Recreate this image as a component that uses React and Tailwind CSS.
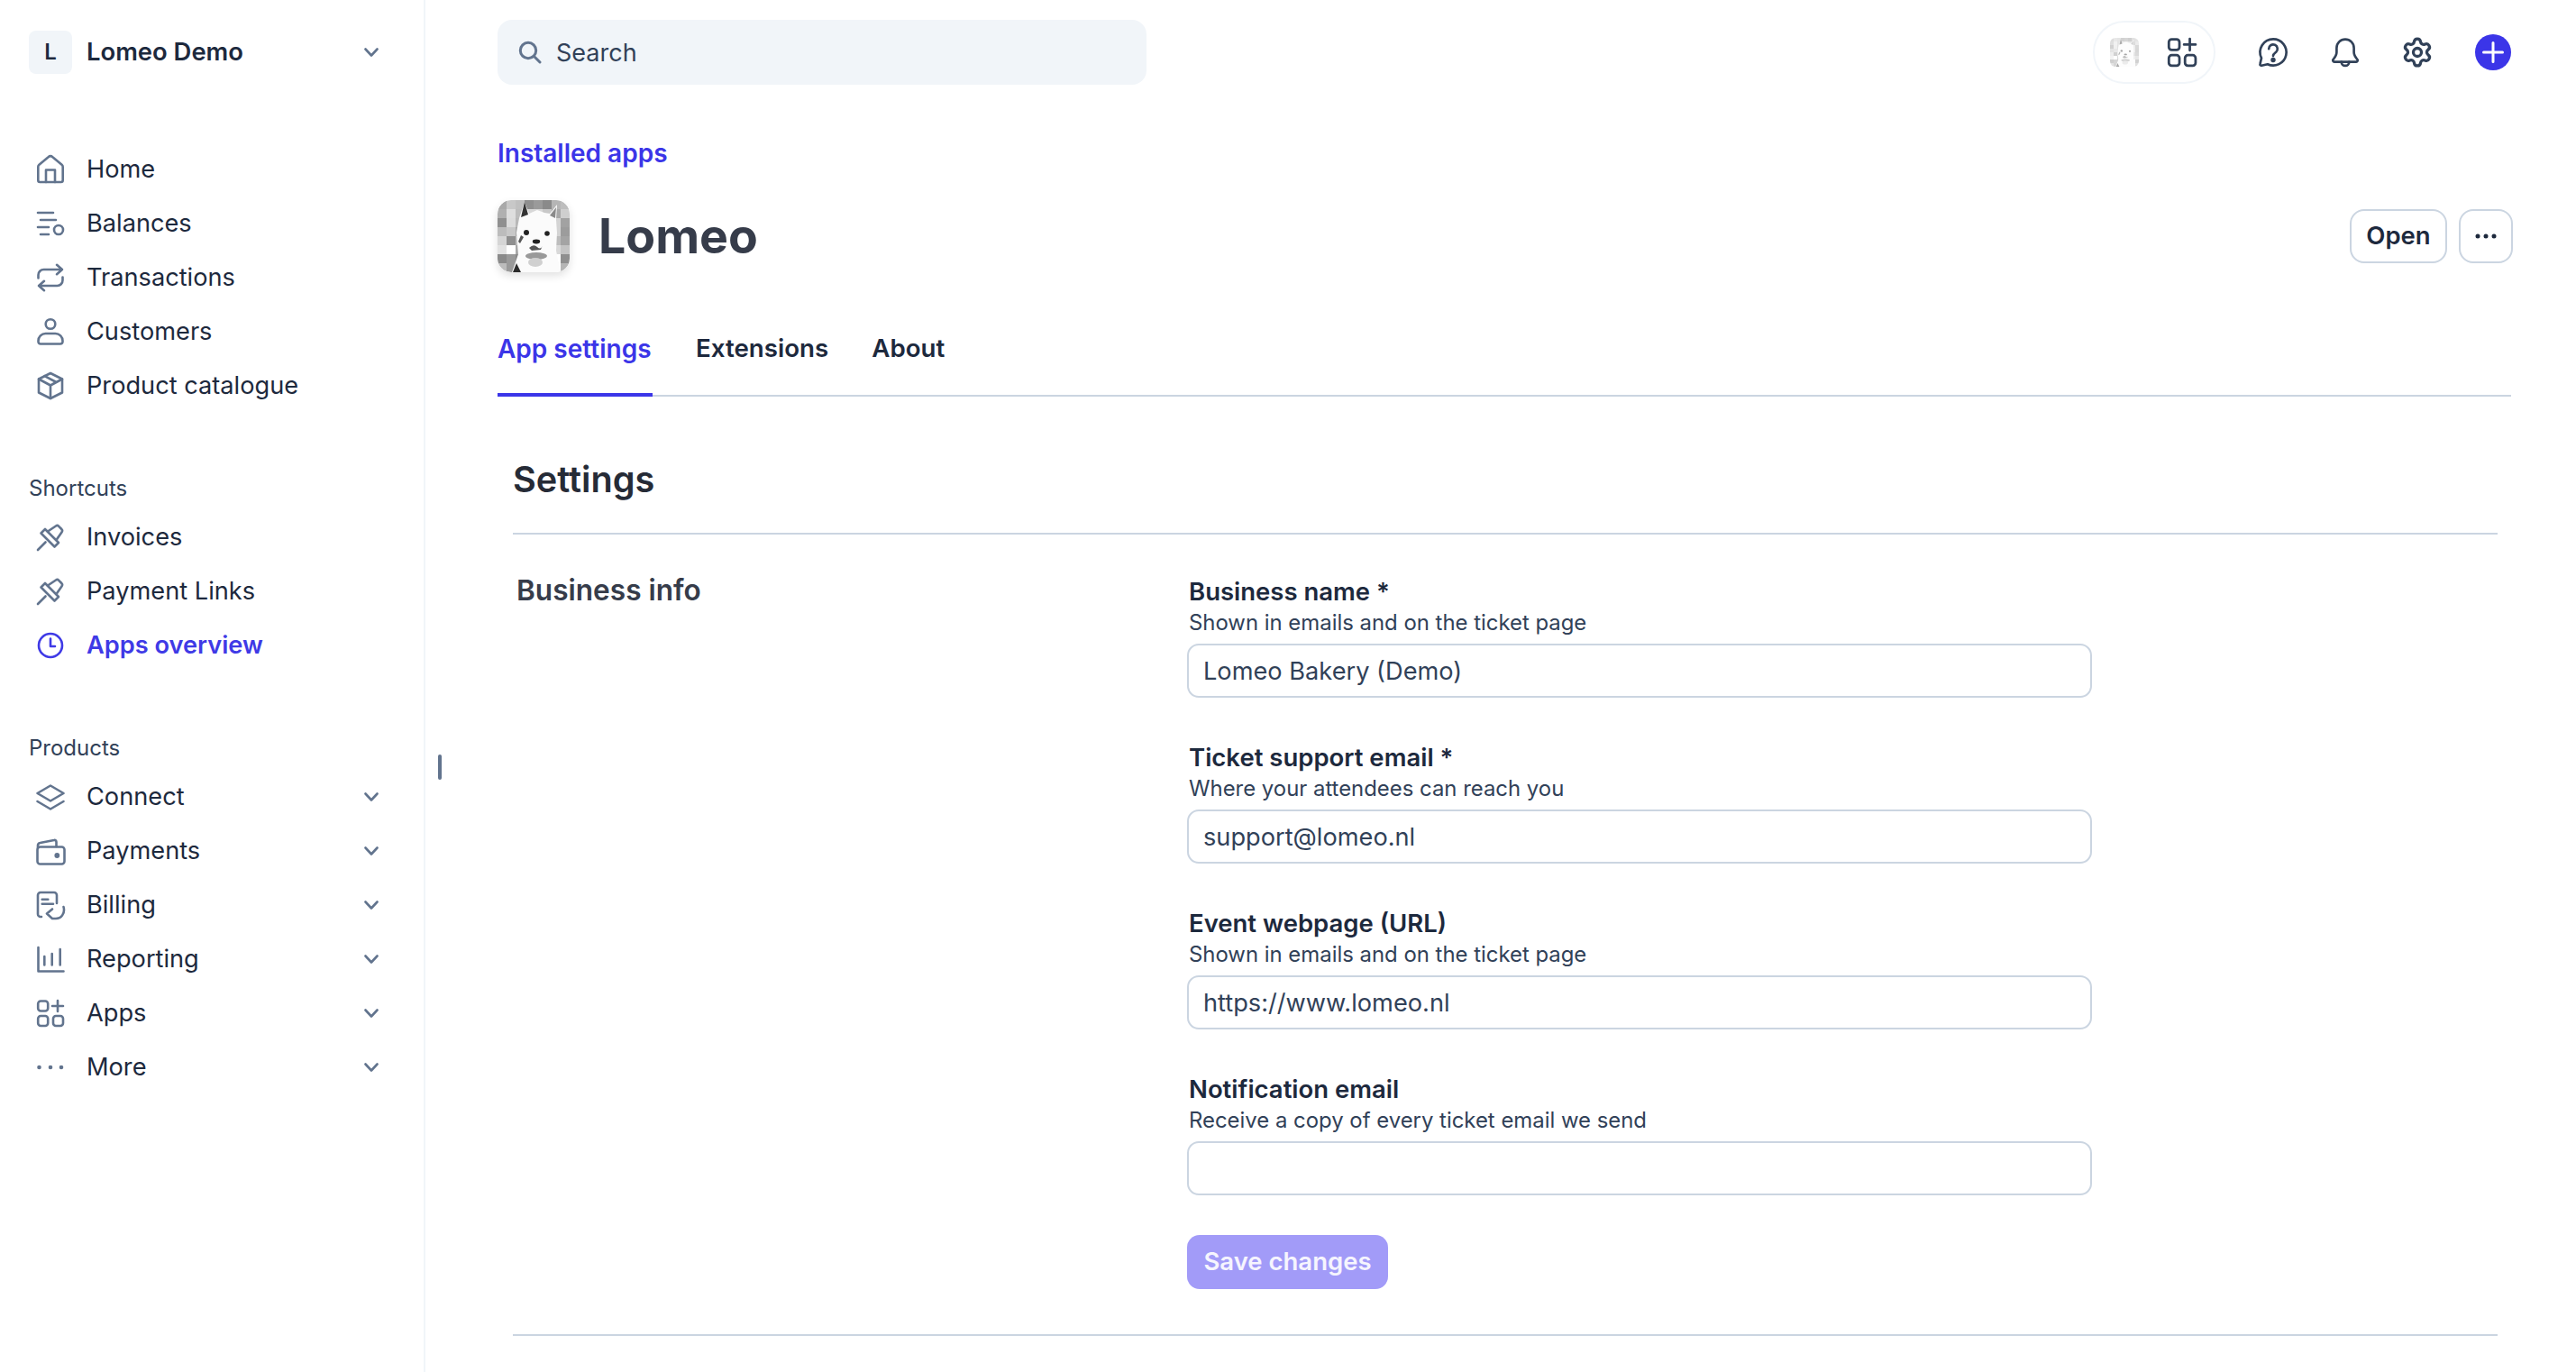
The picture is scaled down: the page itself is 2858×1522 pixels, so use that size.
import React from "react";
import { Settings } from "lucide-react";

const Ico = ({ children, className = "w-[30px] h-[30px]", sw = 2.6 }) => (
  <svg viewBox="0 0 30 30" fill="none" stroke="currentColor" strokeWidth={sw} strokeLinecap="round" strokeLinejoin="round" className={`${className} shrink-0 overflow-visible`}>
    {children}
  </svg>
);

const Home = () => <Ico><path d="M1.300 12a3 3 0 0 1 1.100-2.300L12.600 1.300a3.600 3.600 0 0 1 4.800 0L27.600 9.700a3 3 0 0 1 1.100 2.300V27a2 2 0 0 1-2 2H3.300a2 2 0 0 1-2-2Z" /><path d="M10 29V15.500H20V29" /></Ico>;
const Balances = () => <Ico><path d="M1 3H18M4 11H21M1 19H13M4 27H13" /><circle cx="24" cy="22" r="5" /></Ico>;
const Transactions = () => <Ico><path d="M1.500 15.500V12a6 6 0 0 1 6-6H28M22 .8 28 6 22 11.200" /><path d="M28.500 14.500V18a6 6 0 0 1-6 6H2M8 18.800 2 24 8 29.200" /></Ico>;
const Customers = () => <Ico><circle cx="15" cy="6.500" r="5.300" /><path d="M9.500 17H20.500a8 8 0 0 1 8 8v1a2.500 2.500 0 0 1-2.500 2.500H4A2.500 2.500 0 0 1 1.500 26v-1a8 8 0 0 1 8-8Z" /></Ico>;
const Box = () => <Ico><path d="M15 1 28 7.500V22.500L15 29 2 22.500V7.500Z" /><path d="M2 7.500 15 14.500 28 7.500M15 14.500V29M8.500 4.200 21.500 11" /></Ico>;
const Pin = () => <Ico><path d="M1 29 9.500 20.500" /><path d="M4.500 10.500 9 6 24 21 19.500 25.500Z" /><path d="M12 8.500 21 2.500a2.500 2.500 0 0 1 3.200.3L27.300 6a2.500 2.500 0 0 1 .3 3.200L21.500 18" /></Ico>;
const Clock = () => <Ico><circle cx="15" cy="15" r="13" /><path d="M15 7.500V16H20" /></Ico>;
const Layers = () => <Ico><path d="M15 2.500 29.500 11 15 19.500 .5 11Z" /><path d="M.5 20 15 28.500 29.500 20" /></Ico>;
const Wallet = () => <Ico><rect x="0.5" y="10.500" width="30" height="19" rx="3" /><path d="M1 12V9a3 3 0 0 1 2.500-3L19 3a2 2 0 0 1 2.500 2V10" /><circle cx="22.300" cy="20" r="1.600" fill="currentColor" /></Ico>;
const Billing = () => <Ico><path d="M5 28H4a3 3 0 0 1-3-3V4a3 3 0 0 1 3-3H19a3 3 0 0 1 3 3V13" /><path d="M5.700 8.700H12.300M5.700 13.700H18" /><path d="M29.500 17C31.500 24 27 30 21 30H17L11 24.500 17 19.500" /></Ico>;
const Reporting = () => <Ico><path d="M1.500 2V28.500H29.500" /><path d="M8.300 12V21.500M16.700 9V21.500M25.700 4V21.500" /></Ico>;
const Apps = ({ className, sw }) => <Ico className={className} sw={sw}><rect x="1.200" y="1.500" width="11" height="11" rx="3" /><path d="M23 1V13M17 7H29" /><rect x="1.200" y="18" width="11" height="11" rx="3" /><rect x="18" y="18" width="11" height="11" rx="3" /></Ico>;
const More = () => <Ico sw={0}><circle cx="2.500" cy="15" r="2.300" fill="currentColor" /><circle cx="15" cy="15" r="2.300" fill="currentColor" /><circle cx="27" cy="15" r="2.300" fill="currentColor" /></Ico>;

const Chevron = () => (
  <svg viewBox="0 0 16 12" fill="none" stroke="currentColor" strokeWidth="2.600" strokeLinecap="round" strokeLinejoin="round" className="w-[16px] h-[12px] text-slate-500 shrink-0">
    <path d="M1.500 2.500 8 9.500 14.500 2.500" />
  </svg>
);

const shades = [
  ["#a9a9a9", "#c8c8c8", "#c0c0c0", "#8f8f8f", "#9a9a9a", "#8a8a8a", "#b5b5b5", "#bdbdbd"],
  ["#b0b0b0", "#dedede", "#bdbdbd", "#d8d8d8", "#d8d8d8", "#c8c8c8", "#a8a8a8", "#cfcfcf"],
  ["#8f8f8f", "#dcdcdc", "#b8b8b8", "#dddddd", "#dddddd", "#dddddd", "#d4d4d4", "#a2a2a2"],
  ["#bcbcbc", "#c8c8c8", "#a8a8a8", "#dddddd", "#dddddd", "#dddddd", "#d4d4d4", "#9c9c9c"],
  ["#d5d5d5", "#8f8f8f", "#bdbdbd", "#dddddd", "#dddddd", "#dddddd", "#bdbdbd", "#a4a4a4"],
  ["#e2e2e2", "#ffffff", "#a8a8a8", "#dddddd", "#dddddd", "#dddddd", "#d9d9d9", "#c4c4c4"],
  ["#8a8a8a", "#9a9a9a", "#8a8a8a", "#dddddd", "#dddddd", "#a6a6a6", "#ffffff", "#8f8f8f"],
  ["#bcbcbc", "#9a9a9a", "#d8d8d8", "#dddddd", "#dddddd", "#e6e6e6", "#ffffff", "#b5b5b5"],
];

const Alpaca = ({ id, className }) => (
  <svg viewBox="0 0 80 80" className={className}>
    <defs>
      <clipPath id={id}><rect width="80" height="80" rx="15" /></clipPath>
    </defs>
    <g clipPath={`url(#${id})`}>
      {shades.map((r, y) => r.map((c, x) => <rect key={`${x}-${y}`} x={x * 10} y={y * 10} width="10.200" height="10.200" fill={c} />))}
      <path d="M24 20 30 2 35 15 44 11 52 14 58 15 66 5 65 22 66 36 65 56 70 80H16L23 60 21 36Z" fill="#fbfbfb" />
      <path d="M26 19 30 2 34 16Z" fill="#333" />
      <path d="M58 17 65 8 64 20Z" fill="#8a8a8a" />
      <circle cx="32" cy="36" r="3" fill="#222" />
      <circle cx="55" cy="37" r="2.800" fill="#222" />
      <path d="M26 39 29 41 25 48 23 46Z" fill="#555" />
      <ellipse cx="43" cy="46" rx="4.200" ry="2.400" fill="#222" />
      <path d="M35 53Q40 48 44 52T50 50L48 55 38 56Z" fill="#555" />
      <ellipse cx="43" cy="62" rx="12" ry="4" fill="#999" />
      <ellipse cx="42" cy="69" rx="8" ry="5" fill="#d0d0d0" />
      <path d="M17 80 21 70 26 80Z" fill="#2b2b2b" />
    </g>
  </svg>
);

const NavRow = ({ icon, label, active, chevron }) => (
  <div className={`flex items-center h-[60px] pl-[41px] pr-[50px] ${active ? "text-[#3f3ae6]" : "text-slate-500"}`}>
    {icon}
    <span className={`ml-[25px] flex-1 text-[27.200px] leading-[40px] ${active ? "font-semibold text-[#3f3ae6]" : "text-slate-800"}`}>{label}</span>
    {chevron && <Chevron />}
  </div>
);

const Field = ({ label, hint, value }) => (
  <div className="mb-[48px]">
    <div className="h-[36px] pl-[2px] text-[27.500px] leading-[36px] font-semibold text-slate-800">{label}</div>
    <div className="h-[35px] pl-[2px] text-[23.900px] leading-[34px] text-slate-700">{hint}</div>
    <input
      readOnly
      defaultValue={value}
      className="mt-[5px] block w-[1004px] h-[60px] px-[16px] bg-white border-2 border-[#cbd5e1] rounded-[13px] text-[27.200px] text-slate-700 outline-none"
    />
  </div>
);

export default function App() {
  return (
    <div className="flex min-h-[1522px] bg-white font-['Inter',sans-serif]">
      <aside className="relative w-[472px] shrink-0 border-r-2 border-[#f1f5f9] pt-[34px]">
        <div className="flex items-center h-[48px] pl-[32px] pr-[50px]">
          <div className="flex items-center justify-center w-[48px] h-[48px] rounded-[8px] bg-[#f1f5f9] text-[24px] font-semibold text-slate-800">L</div>
          <span className="ml-[16px] flex-1 text-[27.400px] font-semibold text-slate-800">Lomeo Demo</span>
          <Chevron />
        </div>
        <nav className="mt-[76px]">
          <NavRow icon={<Home />} label="Home" />
          <NavRow icon={<Balances />} label="Balances" />
          <NavRow icon={<Transactions />} label="Transactions" />
          <NavRow icon={<Customers />} label="Customers" />
          <NavRow icon={<Box />} label="Product catalogue" />
        </nav>
        <div className="mt-[66px] pl-[32px] h-[36px] text-[24px] leading-[36px] text-slate-700">Shortcuts</div>
        <nav className="mt-[6px]">
          <NavRow icon={<Pin />} label="Invoices" />
          <NavRow icon={<Pin />} label="Payment Links" />
          <NavRow icon={<Clock />} label="Apps overview" active />
        </nav>
        <div className="mt-[66px] pl-[32px] h-[36px] text-[24px] leading-[36px] text-slate-700">Products</div>
        <nav className="mt-[6px]">
          <NavRow icon={<Layers />} label="Connect" chevron />
          <NavRow icon={<Wallet />} label="Payments" chevron />
          <NavRow icon={<Billing />} label="Billing" chevron />
          <NavRow icon={<Reporting />} label="Reporting" chevron />
          <NavRow icon={<Apps />} label="Apps" chevron />
          <NavRow icon={<More />} label="More" chevron />
        </nav>
        <div className="absolute left-[486px] top-[837px] w-[4px] h-[28px] rounded-full bg-slate-500" />
      </aside>

      <main className="flex-1 min-w-0 pl-[80px] pr-[70px]">
        <header className="flex items-center justify-between mt-[22px] h-[72px]">
          <div className="flex items-center w-[720px] h-[72px] rounded-[16px] bg-[#f1f5f9] pl-[23px]">
            <svg viewBox="0 0 26 26" fill="none" stroke="currentColor" strokeWidth="3" strokeLinecap="round" className="w-[26px] h-[26px] text-slate-500">
              <circle cx="11" cy="11" r="8.700" />
              <path d="M17.500 17.500 24 24" />
            </svg>
            <span className="ml-[16px] pt-[2px] text-[27px] text-slate-700">Search</span>
          </div>
          <div className="flex items-center text-slate-700 pr-[2px]">
            <div className="flex items-center h-[70px] w-[136px] rounded-full border-2 border-[#f1f5f9] pl-[17px]">
              <Alpaca id="logo-small" className="w-[32px] h-[32px] opacity-40" />
              <span className="ml-[32px]"><Apps className="w-[32px] h-[32px]" sw={2.6} /></span>
            </div>
            <span className="ml-[48px]">
              <Ico className="w-[32px] h-[32px]" sw={2.5}>
                <path d="M15 1.300a13.700 13.700 0 1 1-5.800 26.100L3 28.800a1.300 1.300 0 0 1-1.600-1.600L2.800 21A13.700 13.700 0 0 1 15 1.300Z" />
                <path d="M10.500 11.500a4.500 4.500 0 1 1 7.500 3.300c-1.700 1.300-3 2-3 4" />
                <circle cx="15" cy="23" r="1.300" fill="currentColor" />
              </Ico>
            </span>
            <span className="ml-[48px]">
              <Ico className="w-[32px] h-[32px]" sw={2.5}>
                <path d="M15 1.500a9 9 0 0 0-9 9V15c0 3-1.500 5-3.500 7.500A1.500 1.500 0 0 0 3.700 25H26.300a1.500 1.500 0 0 0 1.200-2.500C25.500 20 24 18 24 15V10.500a9 9 0 0 0-9-9Z" />
                <path d="M11 25a4 4 0 0 0 8 0" />
              </Ico>
            </span>
            <Settings className="ml-[46px] w-[36px] h-[36px]" strokeWidth={2.2} />
            <div className="ml-[46px] flex items-center justify-center w-[40px] h-[40px] rounded-full bg-[#3b35e8]">
              <svg viewBox="0 0 24 24" fill="none" stroke="white" strokeWidth="3" strokeLinecap="round" className="w-[24px] h-[24px]">
                <path d="M12 1.500V22.500M1.500 12H22.500" />
              </svg>
            </div>
          </div>
        </header>

        <div className="mt-[56px] h-[40px] text-[28px] leading-[40px] font-semibold text-[#3b35e8]">Installed apps</div>

        <div className="mt-[32px] flex items-center h-[80px]">
          <Alpaca id="logo-big" className="w-[80px] h-[80px] shrink-0 rounded-[15px] shadow-[0_4px_10px_rgba(0,0,0,0.12)]" />
          <h1 className="ml-[32px] flex-1 text-[53.600px] font-[650] text-[#363c4a]">Lomeo</h1>
          <button className="flex items-center justify-center w-[108px] h-[60px] rounded-[16px] border-2 border-[#cbd5e1] text-[27.500px] font-semibold text-slate-800">Open</button>
          <button className="ml-[13px] flex items-center justify-center w-[60px] h-[60px] rounded-[16px] border-2 border-[#cbd5e1] text-slate-800">
            <svg viewBox="0 0 24 6" className="w-[24px] h-[6px]" fill="currentColor">
              <circle cx="3" cy="3" r="2.500" /><circle cx="12" cy="3" r="2.500" /><circle cx="21" cy="3" r="2.500" />
            </svg>
          </button>
        </div>

        <div className="mt-[32px] mr-[2px] flex gap-[48px] h-[106px] border-b-2 border-[#cbd5e1]">
          <div className="flex items-center w-[172px] h-[106px] whitespace-nowrap border-b-4 border-[#3b35e8] pt-[3px] text-[28px] font-semibold text-[#3b35e8]">App settings</div>
          <div className="flex items-center h-[104px] pt-[1px] text-[27.700px] font-semibold text-slate-800">Extensions</div>
          <div className="flex items-center h-[104px] pt-[1px] text-[27.700px] font-semibold text-slate-800">About</div>
        </div>

        <section className="ml-[17px] mr-[17px]">
          <h2 className="mt-[62px] h-[60px] text-[39.700px] leading-[60px] font-semibold text-[#262b36]">Settings</h2>
          <div className="mt-[29px] flex border-t-2 border-[#cbd5e1] pt-[45px]">
            <div className="w-[748px] shrink-0 pl-[4px] -mt-[3px] text-[31.600px] leading-[40px] font-semibold text-[#363c4a]">Business info</div>
            <div>
              <Field label="Business name *" hint="Shown in emails and on the ticket page" value="Lomeo Bakery (Demo)" />
              <Field label="Ticket support email *" hint="Where your attendees can reach you" value="support@lomeo.nl" />
              <Field label="Event webpage (URL)" hint="Shown in emails and on the ticket page" value="https://www.lomeo.nl" />
              <Field label="Notification email" hint="Receive a copy of every ticket email we send" value="" />
              <button className="-mt-[4px] block w-[223px] h-[60px] rounded-[14px] bg-[#a29bf8] text-[27.500px] font-semibold text-white/90">Save changes</button>
            </div>
          </div>
          <div className="mt-[50px] border-t-2 border-[#cbd5e1]" />
        </section>
      </main>
    </div>
  );
}
